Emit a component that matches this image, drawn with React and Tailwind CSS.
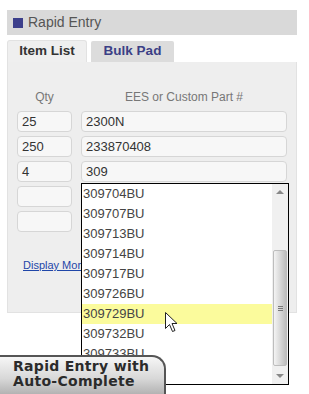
export default function App() {
  const qtys = ["25", "250", "4", "", ""];
  const parts = ["2300N", "233870408", "309", "", ""];
  const suggestions = [
    "309704BU",
    "309707BU",
    "309713BU",
    "309714BU",
    "309717BU",
    "309726BU",
    "309729BU",
    "309732BU",
    "309733BU",
    "309734BU",
  ];

  return (
    <div
      className="relative w-[309px] h-[394px] overflow-hidden bg-white"
      style={{ fontFamily: '"Liberation Sans", Arial, sans-serif' }}
    >
      <div className="w-[297px] pl-[7px] pt-[10px]">
        {/* title bar */}
        <div className="h-[25px] bg-[#d9d9d9] flex items-center pl-[6px] gap-[5px]">
          <div className="w-[10px] h-[10px] bg-[#3c3f8b]"></div>
          <span className="text-[14px] text-[#555]">Rapid Entry</span>
        </div>

        {/* tabs */}
        <div className="flex items-end gap-[4px] mt-[5px]">
          <div className="w-[80px] h-[22px] bg-[#efefef] border border-b-0 border-[#e2e2e2] rounded-t-[3px] flex items-center justify-center text-[13.5px] font-bold text-[#333]">
            Item List
          </div>
          <div className="w-[83px] h-[21px] bg-[#dcdcdc] rounded-t-[2px] flex items-center justify-center text-[13.5px] font-bold text-[#3b3f86]">
            Bulk Pad
          </div>
        </div>

        {/* panel */}
        <div className="h-[251px] bg-[#eeeeee] border border-t-0 border-[#e2e2e2] px-[9px] pt-[28px]">
          <div className="flex gap-[9px] text-[12px] leading-[14px] text-[#777] mb-[7px]">
            <div className="w-[55px] text-center">Qty</div>
            <div className="flex-1 text-center">EES or Custom Part #</div>
          </div>

          <div className="flex flex-col gap-[4px]">
            {qtys.map((q, i) => (
              <div key={i} className="flex gap-[9px]">
                <div className="w-[55px] h-[21px] rounded-[4px] border border-[#d6d6d6] bg-[#f7f7f7] pl-[4px] flex items-center text-[13px] text-[#333]">
                  {q}
                </div>
                <div className="flex-1 h-[21px] rounded-[4px] border border-[#d6d6d6] bg-[#f7f7f7] pl-[4px] flex items-center text-[13px] text-[#333]">
                  {parts[i]}
                </div>
              </div>
            ))}
          </div>

          <div className="mt-[27px] pl-[6px] text-[11px] leading-[13px] text-[#1f46a8] underline">
            Display More
          </div>
        </div>
      </div>

      {/* auto-complete dropdown */}
      <div className="absolute left-[81px] top-[183px] w-[208px] h-[202px] border border-black bg-white flex">
        <div className="flex-1 overflow-hidden">
          {suggestions.map((s) => (
            <div
              key={s}
              className={`h-[20px] leading-[20px] text-[13px] text-[#444] pl-[1px] ${
                s === "309729BU" ? "bg-[#fbfb9c]" : ""
              }`}
            >
              {s}
            </div>
          ))}
        </div>
        <div className="relative w-[16px] bg-[#f0f0f0]">
          <div className="absolute left-[4px] top-[6px] w-0 h-0 border-l-[4px] border-r-[4px] border-b-[4px] border-l-transparent border-r-transparent border-b-[#888]"></div>
          <div className="absolute left-[1px] right-[1px] top-[66px] h-[116px] rounded-[2px] border border-[#bdbdbd] bg-linear-to-r from-[#f4f4f4] via-[#d9d9d9] to-[#bdbdbd]">
            <div className="absolute left-[4px] top-[55px] flex flex-col gap-[1px]">
              <div className="w-[5px] h-[1px] bg-[#777]"></div>
              <div className="w-[5px] h-[1px] bg-[#777]"></div>
              <div className="w-[5px] h-[1px] bg-[#777]"></div>
            </div>
          </div>
          <div className="absolute left-[4px] bottom-[6px] w-0 h-0 border-l-[4px] border-r-[4px] border-t-[4px] border-l-transparent border-r-transparent border-t-[#888]"></div>
        </div>
      </div>

      {/* mouse cursor */}
      <svg
        className="absolute left-[165px] top-[312px]"
        width="13"
        height="21"
        viewBox="0 0 13 21"
      >
        <path
          d="M0.5 0.5 L0.5 16.5 L4.5 12.5 L7.5 19.5 L10 18.5 L7 11.5 L12 11.5 Z"
          fill="white"
          stroke="#222"
          strokeWidth="1"
          strokeLinejoin="round"
        />
      </svg>

      {/* caption badge */}
      <div
        className="absolute left-0 top-[355px] w-[166px] h-[45px] rounded-tr-[14px] border-t-2 border-r-2 border-[#555] bg-linear-to-b from-[#f6f6f6] via-[#d8d8d8] to-[#a5a5a5] pl-[13px] pt-[2px] text-[14px] leading-[15px] font-bold text-[#2b2b2b] tracking-[0.3px]"
        style={{ fontFamily: '"DejaVu Sans", Verdana, sans-serif' }}
      >
        <div>Rapid Entry with</div>
        <div>Auto-Complete</div>
      </div>
    </div>
  );
}
